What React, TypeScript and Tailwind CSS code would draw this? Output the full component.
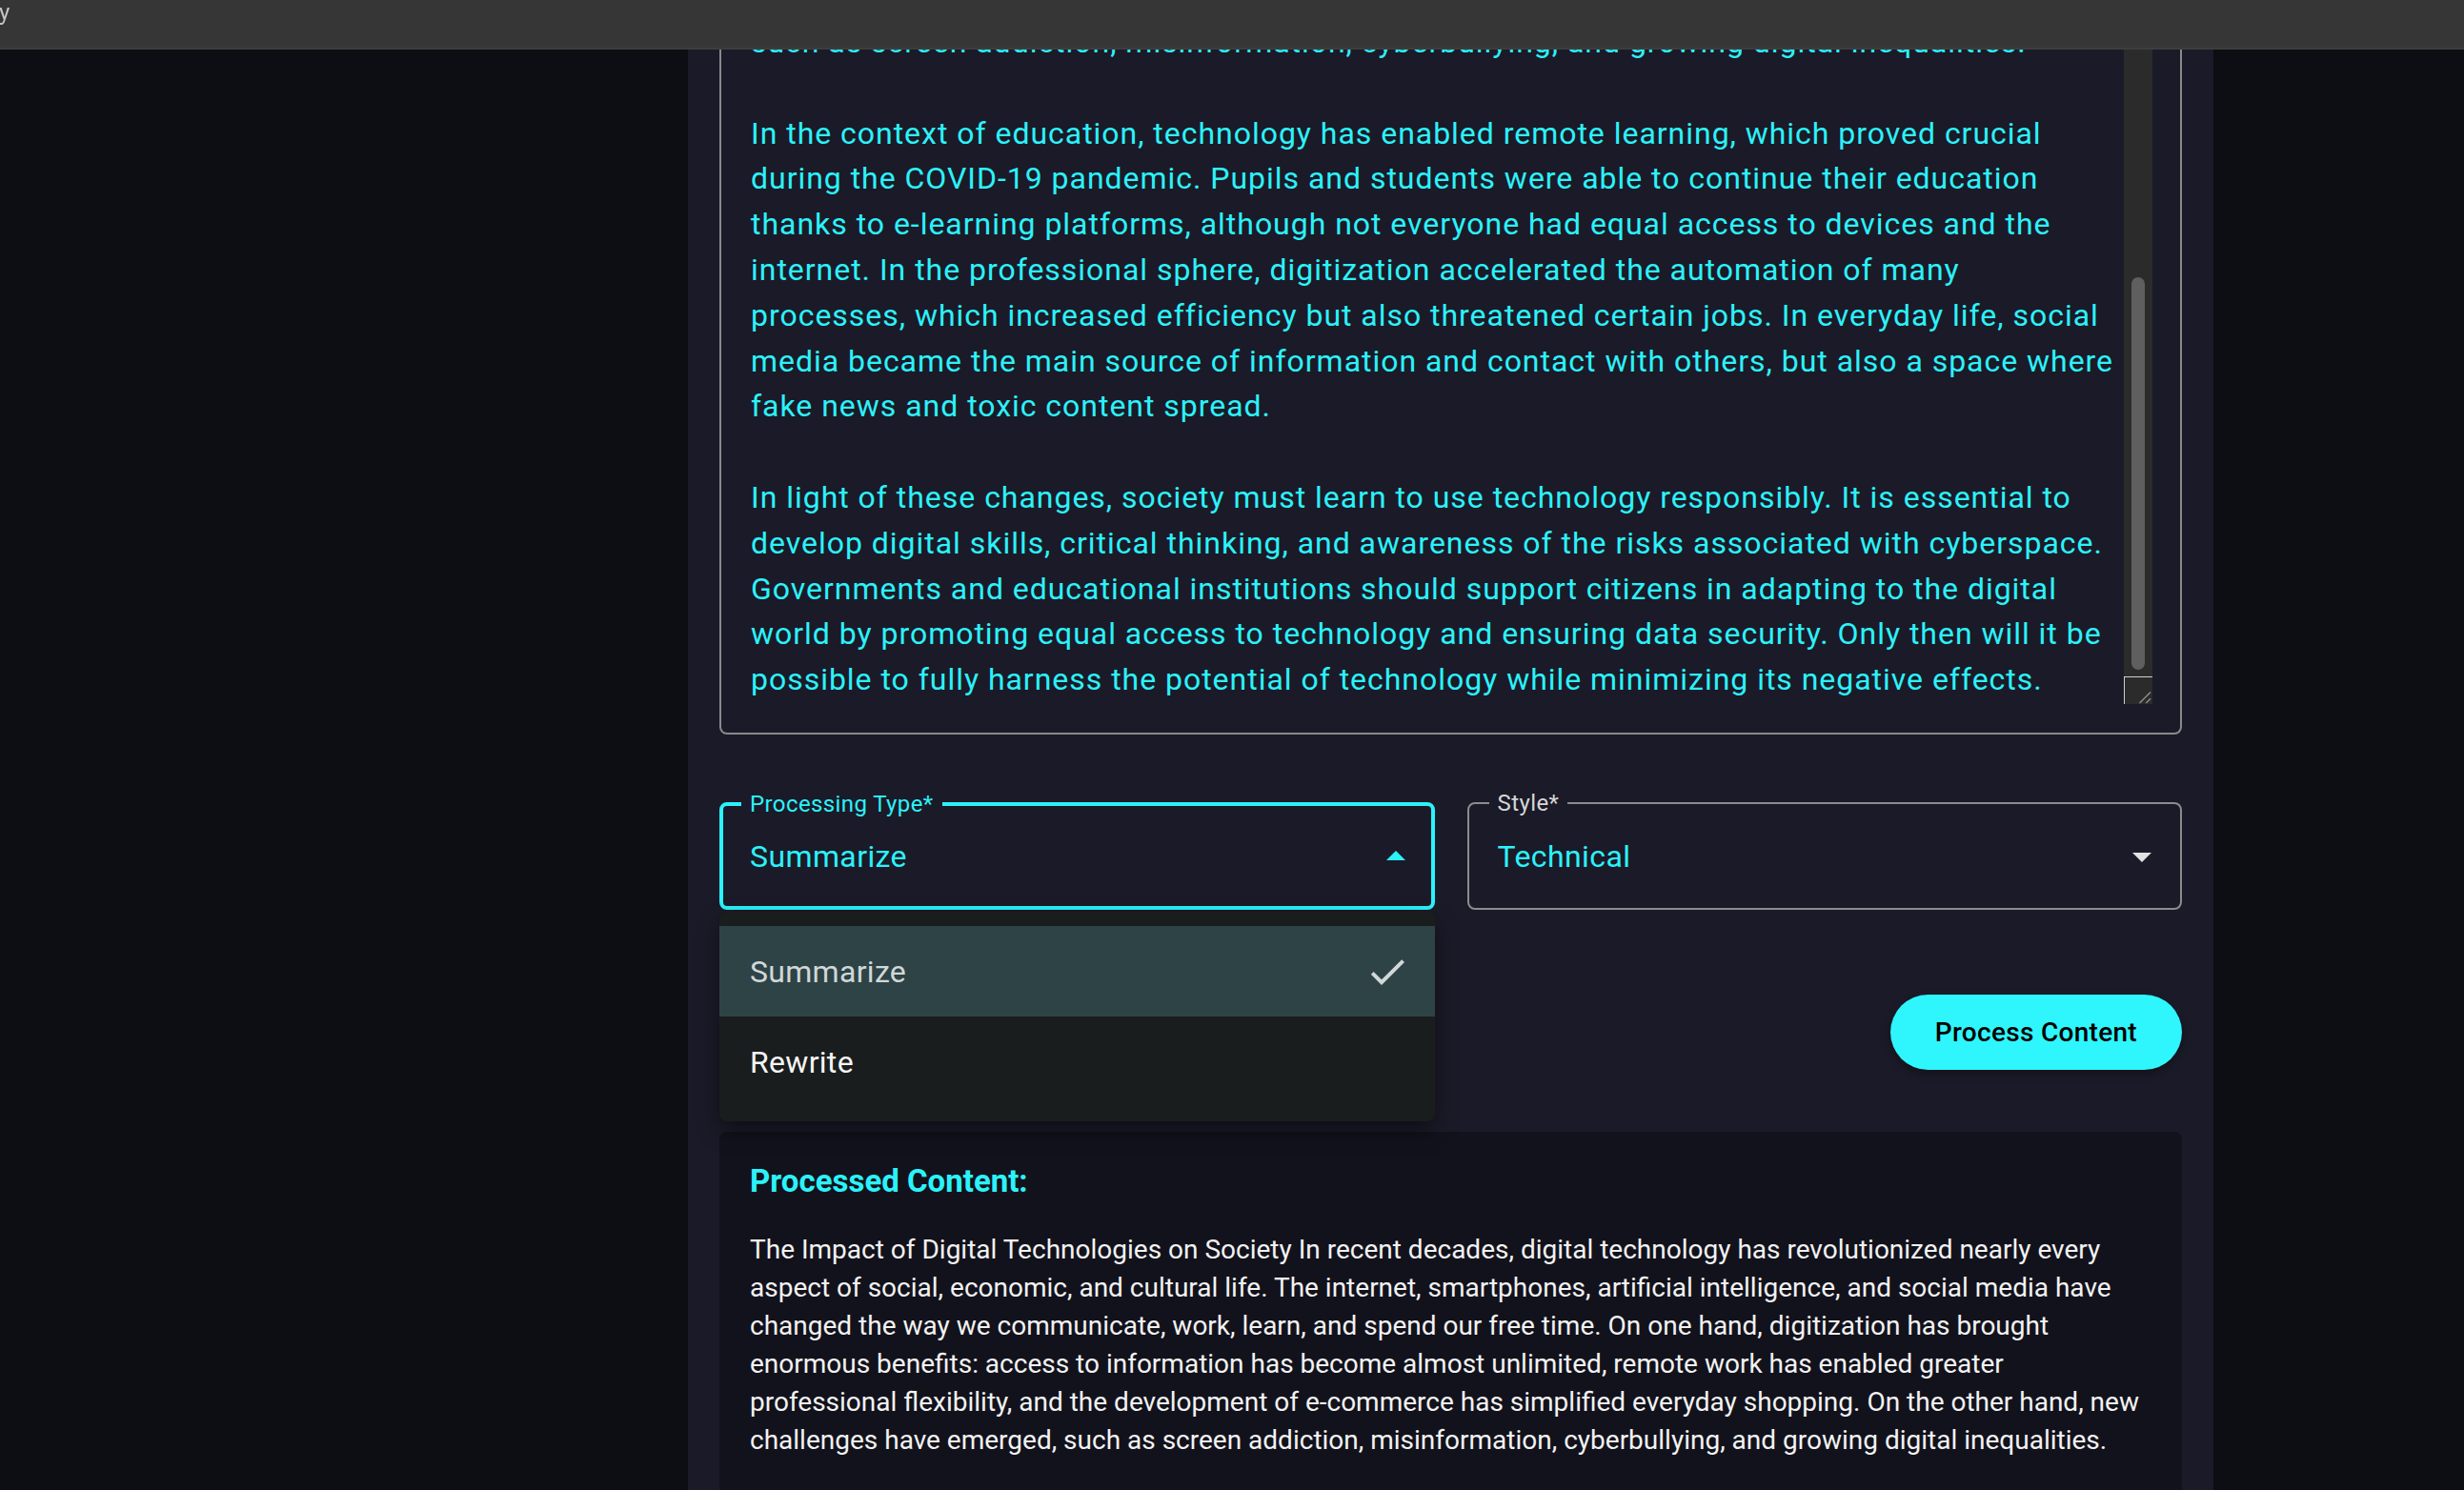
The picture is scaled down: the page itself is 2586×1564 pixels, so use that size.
import React from 'react';

const essay = [
  'The Impact of Digital Technologies on Society',
  '',
  'In recent decades, digital technology has revolutionized nearly every aspect of social, economic, and cultural life. The internet, smartphones, artificial intelligence, and social media have changed the way we communicate, work, learn, and spend our free time. On one hand, digitization has brought enormous benefits: access to information has become almost unlimited, remote work has enabled greater professional flexibility, and the development of e-commerce has simplified everyday shopping. On the other hand, new challenges have emerged,\nsuch as screen addiction, misinformation, cyberbullying, and growing digital inequalities.',
  '',
  'In the context of education, technology has enabled remote learning, which proved crucial during the COVID-19 pandemic. Pupils and students were able to continue their education thanks to e-learning platforms, although not everyone had equal access to devices and the internet. In the professional sphere, digitization accelerated the automation of many processes, which increased efficiency but also threatened certain jobs. In everyday life, social media became the main source of information and contact with others, but also a space where fake news and toxic content spread.',
  '',
  'In light of these changes, society must learn to use technology responsibly. It is essential to develop digital skills, critical thinking, and awareness of the risks associated with cyberspace. Governments and educational institutions should support citizens in adapting to the digital world by promoting equal access to technology and ensuring data security. Only then will it be possible to fully harness the potential of technology while minimizing its negative effects.',
].join('\n');

const processed =
  'The Impact of Digital Technologies on Society In recent decades, digital technology has revolutionized nearly every aspect of social, economic, and cultural life. The internet, smartphones, artificial intelligence, and social media have changed the way we communicate, work, learn, and spend our free time. On one hand, digitization has brought enormous benefits: access to information has become almost unlimited, remote work has enabled greater professional flexibility, and the development of e-commerce has simplified everyday shopping. On the other hand, new challenges have emerged, such as screen addiction, misinformation, cyberbullying, and growing digital inequalities.';

function ArrowDrop({ up, className }: { up?: boolean; className: string }) {
  return (
    <svg viewBox="0 0 24 24" className={className} fill="currentColor">
      {up ? <path d="M7 14l5-5 5 5z" /> : <path d="M7 10l5 5 5-5z" />}
    </svg>
  );
}

function CheckIcon() {
  return (
    <svg viewBox="0 0 24 24" className="h-[48px] w-[48px]" fill="currentColor">
      <path d="M9 16.17 4.83 12l-1.42 1.41L9 19 21 7l-1.41-1.41z" />
    </svg>
  );
}

export default function App() {
  return (
    <div className="flex h-screen w-full overflow-hidden bg-[#0d0e14] font-['Roboto','Liberation_Sans',sans-serif]">
      {/* top bar overlays the scrolled page */}
      <header className="fixed inset-x-0 top-0 z-20 flex h-[52px] items-start border-b-2 border-[#3d3d3d] bg-[#363636]">
        <span className="-ml-[1px] mt-[-2px] text-[24px] leading-[30px] text-[#c4c4c4]">y</span>
      </header>

      <div className="w-[722px] shrink-0" />

      <main className="flex w-[1601px] shrink-0 flex-col bg-[#1b1a28] px-[33px]">
        {/* Content textarea (scrolled to bottom) */}
        <div className="flex h-[771px] shrink-0 rounded-b-[8px] border-x-2 border-b-2 border-[#8a8a8a]">
          <div className="flex min-w-0 flex-1 flex-col justify-end overflow-hidden pb-[31px] pl-[31px] pr-[6px]">
            <p className="whitespace-pre-wrap text-[32px] leading-[47.8px] tracking-[0.97px] text-[#2cf2fa]">{essay}</p>
          </div>
          <div className="mr-[29px] flex w-[30px] shrink-0 flex-col pb-[30px]">
            <div className="flex flex-1 flex-col justify-end bg-[#2b2b2b] px-[8px] pb-[7px]">
              <div className="h-[412px] rounded-full bg-[#5f5f5f]" />
            </div>
            <div className="h-[29px] border-l border-t border-[#d0d0d0] bg-[#2b2b2b]">
              <svg viewBox="0 0 30 29" className="h-full w-full" stroke="#8c8c8c" strokeWidth="1.5">
                <line x1="16" y1="28" x2="28" y2="16" />
                <line x1="23" y1="28" x2="28" y2="23" />
              </svg>
            </div>
          </div>
        </div>

        {/* Selects */}
        <div className="mt-[60px] grid shrink-0 grid-cols-2 items-end gap-[34px]">
          <div className="relative">
            <fieldset className="min-w-0 rounded-[8px] border-4 border-[#2cf2fa] pl-[19px]">
              <legend className="px-[9px] text-[24px] leading-[24px] tracking-[0.4px] text-[#2cf2fa]">Processing Type*</legend>
              <div className="flex h-[95px] items-center justify-between pb-[10px] pl-[9px] pr-[13px]">
                <span className="text-[32px] leading-[48px] tracking-[0.4px] text-[#2cf2fa]">Summarize</span>
                <ArrowDrop up className="h-[48px] w-[48px] text-[#2cf2fa]" />
              </div>
            </fieldset>

            {/* open menu */}
            <div className="absolute left-0 right-0 top-full z-10 mt-[2px] rounded-[8px] bg-[#1a1d1e] py-[15px] shadow-[0_10px_24px_rgba(0,0,0,0.45)]">
              <div className="flex h-[95px] items-center justify-between bg-[#2e4346] pl-[32px] pr-[26px] text-[#d0d8d8]">
                <span className="text-[32px] leading-[48px] tracking-[0.3px]">Summarize</span>
                <CheckIcon />
              </div>
              <div className="flex h-[95px] items-center pl-[32px] text-[#f5f5f5]">
                <span className="text-[32px] leading-[48px] tracking-[0.3px]">Rewrite</span>
              </div>
            </div>
          </div>

          <fieldset className="min-w-0 rounded-[8px] border-2 border-[#8b8c8c] pl-[21px]">
            <legend className="px-[9px] text-[24px] leading-[24px] tracking-[0.4px] text-[#d6d6d6]">Style*</legend>
            <div className="flex h-[98px] items-center justify-between pb-[11px] pl-[9px] pr-[16px]">
              <span className="text-[32px] leading-[48px] tracking-[0.4px] text-[#2cf2fa]">Technical</span>
              <ArrowDrop className="h-[48px] w-[48px] text-[#e2e2e2]" />
            </div>
          </fieldset>
        </div>

        {/* Action */}
        <div className="mt-[89px] flex shrink-0 justify-end">
          <button className="h-[79px] rounded-full bg-[#2ef6fc] px-[47px] text-[28px] font-medium tracking-[0.3px] text-black shadow-[0_4px_8px_rgba(0,0,0,0.35)]">
            Process Content
          </button>
        </div>

        {/* Result */}
        <section className="mt-[65px] shrink-0 rounded-[8px] bg-[#12121c] px-[32px] pt-[32px] pb-[40px]">
          <h2 className="text-[33px] font-bold leading-[40px] text-[#2cf2fa]">Processed Content:</h2>
          <p className="mt-[32px] text-[28px] leading-[40px] text-[#f2f2f2]">{processed}</p>
        </section>
      </main>

      <div className="flex-1" />
    </div>
  );
}
